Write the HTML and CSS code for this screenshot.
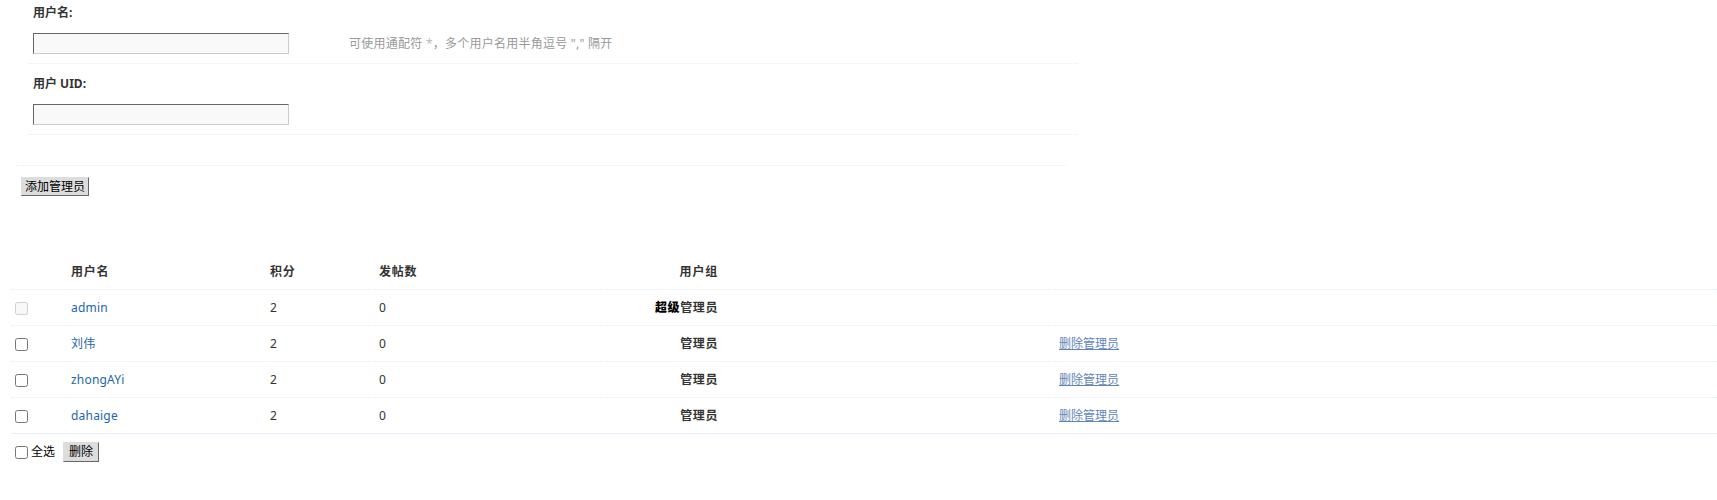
FILE: index.html
```html
<!DOCTYPE html>
<html lang="zh-CN">
<head>
<meta charset="utf-8">
<title>管理员</title>
<link rel="stylesheet" href="styles.css">
</head>
<body>
<div class="form">
  <div class="lab lab-first">用户名:</div>
  <div class="field">
    <input class="txt" type="text">
    <span class="tips">可使用通配符 <span class="star">*</span>，多个用户名用半角逗号 "," 隔开</span>
  </div>
  <div class="lab">用户 UID:</div>
  <div class="field">
    <input class="txt" type="text">
  </div>
</div>
<div class="sep"></div>
<div class="actions"><button class="btn" type="button">添加管理员</button></div>

<table class="tb">
  <colgroup>
    <col class="c-chk"><col class="c-name"><col class="c-credit"><col class="c-posts"><col class="c-group"><col class="c-gap"><col>
  </colgroup>
  <tr class="header">
    <td></td>
    <td>用户名</td>
    <td>积分</td>
    <td>发帖数</td>
    <td class="right">用户组</td>
    <td></td>
    <td></td>
  </tr>
  <tr>
    <td><input class="chk" type="checkbox" disabled></td>
    <td><a class="user" href="#">admin</a></td>
    <td>2</td>
    <td>0</td>
    <td class="right group"><b class="super">超级</b>管理员</td>
    <td></td>
    <td></td>
  </tr>
  <tr>
    <td><input class="chk" type="checkbox"></td>
    <td><a class="user" href="#">刘伟</a></td>
    <td>2</td>
    <td>0</td>
    <td class="right group">管理员</td>
    <td></td>
    <td><a class="act" href="#">删除管理员</a></td>
  </tr>
  <tr>
    <td><input class="chk" type="checkbox"></td>
    <td><a class="user" href="#">zhongAYi</a></td>
    <td>2</td>
    <td>0</td>
    <td class="right group">管理员</td>
    <td></td>
    <td><a class="act" href="#">删除管理员</a></td>
  </tr>
  <tr class="last">
    <td><input class="chk" type="checkbox"></td>
    <td><a class="user" href="#">dahaige</a></td>
    <td>2</td>
    <td>0</td>
    <td class="right group">管理员</td>
    <td></td>
    <td><a class="act" href="#">删除管理员</a></td>
  </tr>
</table>
<div class="foot">
  <input class="chk" type="checkbox" id="chkall"><label class="chk-label" for="chkall">全选</label>
  <button class="btn btn-del" type="button">删除</button>
</div>
</body>
</html>
```

FILE: styles.css
```css
body {
  margin: 0;
  font-family: "Noto Sans", "Noto Sans CJK SC", sans-serif;
  font-size: 12px;
  line-height: 18px;
  color: #333;
  background: #fff;
}

.form {
  margin-left: 28px;
  width: 1050px;
  padding-top: 4px;
}

.lab {
  padding: 11px 0 0 5px;
  font-weight: bold;
  color: #333;
}

.lab-first {
  padding-top: 0;
}

.field {
  display: flex;
  align-items: center;
  padding: 11px 0 9px 5px;
  border-bottom: 1px dotted #deeffb;
}

.txt {
  box-sizing: content-box;
  width: 250px;
  height: 15px;
  margin: 0;
  padding: 2px;
  border: 1px solid;
  border-color: #666 #ccc #ccc #666;
  background: #f9f9f9;
  font: inherit;
}

.tips {
  margin-left: 60px;
  color: #999;
  letter-spacing: 0.25px;
}

.star {
  color: #bbb;
}

.sep {
  margin: 30px 0 0 16px;
  width: 1050px;
  border-top: 1px dotted #deeffb;
}

.actions {
  margin: 11px 0 0 21px;
  display: flex;
}

.btn {
  margin: 0;
  padding: 1px 3px;
  border: 1px solid;
  border-color: #ddd #666 #666 #ddd;
  background: #ddd;
  color: #000;
  font-family: inherit;
  font-size: 12px;
  line-height: 15px;
  cursor: pointer;
}

.tb {
  margin: 58px 0 0 11px;
  width: calc(100% - 11px);
  table-layout: fixed;
  border-collapse: separate;
  border-spacing: 0;
}

.c-chk { width: 56px; }
.c-name { width: 199px; }
.c-credit { width: 109px; }
.c-posts { width: 225px; }
.c-group { width: 122px; }
.c-gap { width: 333px; }

.tb td {
  padding: 9px 4px 8px;
  line-height: 18px;
  border-bottom: 1px dotted #deeffb;
  vertical-align: middle;
  white-space: nowrap;
}

.tb .last td {
  border-bottom-style: solid;
  border-bottom-color: #e3eef8;
}

.header td {
  font-weight: bold;
  letter-spacing: 0.8px;
}

.right {
  text-align: right;
}

.group {
  font-weight: bold;
  letter-spacing: 0.6px;
}

.super {
  color: #000;
}

.chk {
  margin: 0;
  width: 13px;
  height: 13px;
  vertical-align: middle;
}

.user {
  color: #2366a8;
  text-decoration: none;
  letter-spacing: 0.2px;
}

.act {
  color: #5f84b9;
  text-decoration: underline;
}

.foot {
  display: flex;
  align-items: center;
  padding: 8px 0 0 15px;
}

.chk-label {
  margin-left: 3px;
  color: #000;
}

.btn-del {
  margin-left: 8px;
  padding: 2px 5px;
  line-height: 14px;
}
```
